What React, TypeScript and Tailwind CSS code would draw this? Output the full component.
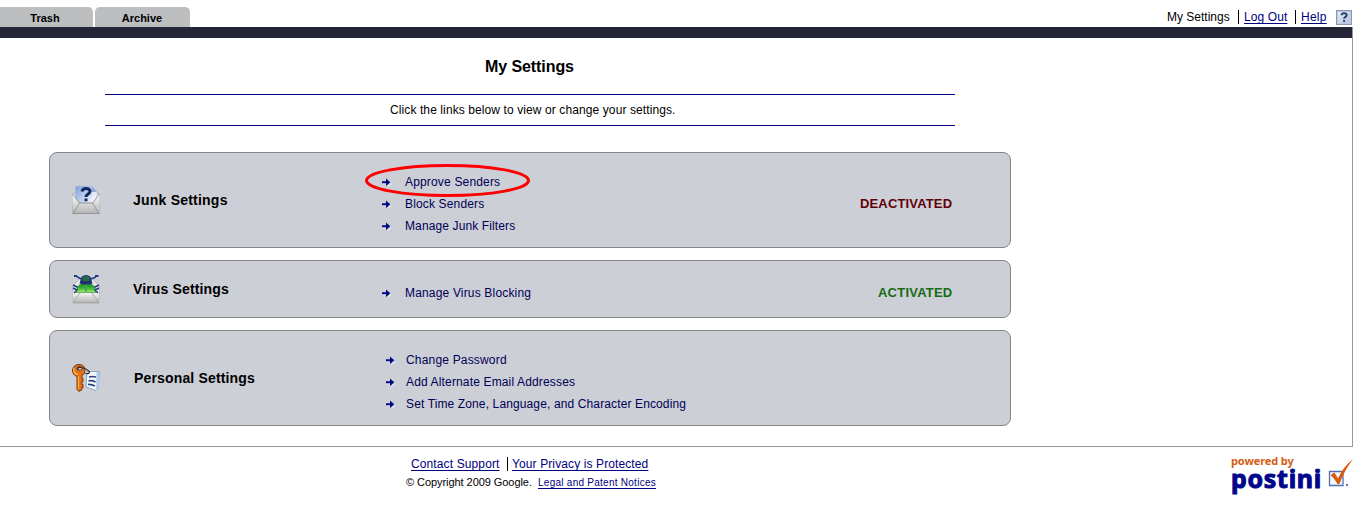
import type { ReactNode } from 'react';

function Arrow() {
  return (
    <svg width="9" height="9" viewBox="0 0 9 9" className="shrink-0">
      <path d="M1 5.7h4.2M6 8.5L9 5.6" stroke="#f4f5f8" strokeWidth="1" fill="none" />
      <path d="M0 3.3h4V0.5L8.3 4.2 4 8V5.2H0z" fill="#000a85" />
    </svg>
  );
}

function JunkIcon() {
  return (
    <svg width="30" height="30" viewBox="0 0 30 30">
      <defs>
        <linearGradient id="junkPaper" x1="0" x2="1" y1="0" y2="0.6">
          <stop offset="0" stopColor="#7f9fda" />
          <stop offset="1" stopColor="#f2f6fd" />
        </linearGradient>
        <linearGradient id="envelope" x1="0" x2="0" y1="0" y2="1">
          <stop offset="0" stopColor="#ffffff" />
          <stop offset="1" stopColor="#b4b4b4" />
        </linearGradient>
      </defs>
      <path d="M1.500 9L5 7h20l3.500 2v19.500h-27z" fill="#dcdde0" stroke="#a3a4a6" strokeWidth="0.8" />
      <path d="M1.500 9l7 9h13l7-9v19.500h-27z" fill="url(#envelope)" />
      <path d="M4.500 2.500q0-1.500 2-1.500h14l5.500 5v7l-4.500 5h-13l-4-5z" fill="url(#junkPaper)" stroke="#a6b7dc" strokeWidth="0.5" />
      <path d="M20.500 1v6H26z" fill="#8ca5d8" />
      <path d="M11 6.500q.5-3 4-3 4 0 4 3c0 2.500-4 2.700-4 5.500M15 13.500v2.800" fill="none" stroke="#132864" strokeWidth="3" />
      <path d="M1.500 9l7 9h13l7-9M8.500 18l-6 10M21.500 18l6 10M1.500 28.500h27" fill="none" stroke="#929292" strokeWidth="0.9" />
    </svg>
  );
}

function VirusIcon() {
  return (
    <svg width="30" height="30" viewBox="0 0 30 30">
      <defs>
        <linearGradient id="virusEnvelope" x1="0" x2="0" y1="0" y2="1">
          <stop offset="0" stopColor="#ffffff" />
          <stop offset="1" stopColor="#b0b0b0" />
        </linearGradient>
        <linearGradient id="shell" x1="0" x2="0" y1="0" y2="1">
          <stop offset="0" stopColor="#157a25" />
          <stop offset="0.55" stopColor="#35b52f" />
          <stop offset="1" stopColor="#a8f06c" />
        </linearGradient>
      </defs>
      <path d="M2 12l8-9h10l8 9v17H2z" fill="#e6e7e9" stroke="#aaaaaa" strokeWidth="0.7" />
      <path d="M10 5L5 2M20 5l5-2M8 14l-6-3M22 14l6-3" stroke="#203c86" strokeWidth="1.500" fill="none" />
      <path d="M3 2h3M24 2h3.500" stroke="#203c86" strokeWidth="2.200" />
      <path d="M2 17.500h26v11.500H2z" fill="url(#virusEnvelope)" />
      <path d="M5 18.500q1-9 9.500-10v10zM25 18.500q-1-9-9.500-10v10z" fill="url(#shell)" stroke="#267d36" strokeWidth="0.6" />
      <path d="M8.500 9.500l2-6.500q4.500-4 9 0l2 6.500q-6 2-13 0z" fill="#202f70" />
      <path d="M11.500 3.500q3.500-3 7 0V7h-7z" fill="#246c45" />
      <path d="M9 19l-6.500 9M21 19l6.500 9M2 28.700h26" fill="none" stroke="#a5a5a5" strokeWidth="0.9" />
      <path d="M2 14l4 2-3 3M28 14l-4 2 3 3" fill="none" stroke="#263e83" strokeWidth="1.500" />
    </svg>
  );
}

function KeyIcon() {
  return (
    <svg width="30" height="30" viewBox="0 0 30 30">
      <path d="M16 8.500h12.500l-1.500 17-2 2L15 24z" fill="#f6faff" stroke="#7896bb" strokeWidth="0.8" />
      <path d="M25 27l2.500-2 1-16h-3z" fill="#b2cbed" />
      <path d="M18 14q4-1 7 0M17.500 18q3-1 7 1M17 21.500q3-.5 7 1.500" stroke="#29437f" strokeWidth="1.600" fill="none" />
      <path d="M8 1.500q6 0 6 6 0 3.500-3 5v3h1v3h-1v3h1v3h-1v2l-3 2-2-2V13.500Q1.500 12 1.500 7q1-5.500 6.500-5.500z" fill="#e0701a" stroke="#7c340a" strokeWidth="1" />
      <path d="M7.500 13v13" stroke="#ffb238" strokeWidth="1.200" />
      <path d="M3 5q-1 6 4 6.500" stroke="#ffb844" strokeWidth="1.300" fill="none" />
      <ellipse cx="8.500" cy="5.500" rx="2.500" ry="1.800" fill="#cdced3" stroke="#5c2a08" strokeWidth="0.8" />
      <path d="M7 7q-1-3 3-2.500 6 1 8.500 4.500 0 2-4 1.500" fill="none" stroke="#242b36" strokeWidth="1.200" />
    </svg>
  );
}

function HelpIcon() {
  return (
    <svg width="16" height="15" viewBox="0 0 16 15" className="mt-[3px] shrink-0">
      <defs>
        <linearGradient id="helpFace" x1="0" x2="1" y1="0" y2="1">
          <stop offset="0" stopColor="#f0f4fb" />
          <stop offset="1" stopColor="#a9bbdb" />
        </linearGradient>
      </defs>
      <rect x="0.500" y="0.500" width="15" height="14" fill="url(#helpFace)" stroke="#8d98ae" />
      <rect x="1.500" y="1.500" width="13" height="12" fill="none" stroke="#b9c7df" />
      <path d="M5.500 5.300q0-2 2.600-2t2.600 1.900c0 1.700-2.600 1.600-2.600 3.500M8.100 10v2" fill="none" stroke="#2b3f6b" strokeWidth="1.900" />
    </svg>
  );
}

function SettingRow({ children, className }: { children: ReactNode; className: string }) {
  return (
    <li className="flex h-[22px] items-center">
      <Arrow />
      <a href="#" className={className}>{children}</a>
    </li>
  );
}

const card = 'flex w-[962px] rounded-[8px] border border-[#858588] bg-[#cdcfd6]';

export default function App() {
  return (
    <div className="h-[512px] w-[1355px] overflow-hidden bg-white font-['Liberation_Sans',Arial,sans-serif] text-[12px] leading-[14px] whitespace-nowrap text-black">
      <header className="flex h-[27px] w-[1355px] items-end justify-between">
        <nav className="flex gap-[2px] text-[11px] font-bold">
          <a href="#" className="flex h-5 w-[93px] items-center justify-center rounded-tr-[5px] bg-[#bdbec0] pt-[2px] pr-[3px]">Trash</a>
          <a href="#" className="flex h-5 w-[95px] items-center justify-center rounded-t-[5px] bg-[#bdbec0] pt-[2px] pr-[1px]">Archive</a>
        </nav>
        <div className="flex h-[20px] w-[188px] items-start">
          <span className="w-[71px] pt-[3px]">My Settings</span>
          <span className="mt-[3px] h-[14px] w-[6px] border-l border-black" />
          <a href="#" className="w-[51px] pt-[3px] tracking-[0.1px] text-[#000080] underline underline-offset-2">Log Out</a>
          <span className="mt-[3px] h-[14px] w-[6px] border-l border-black" />
          <a href="#" className="w-[35px] pt-[3px] tracking-[0.25px] text-[#000080] underline underline-offset-2">Help</a>
          <HelpIcon />
        </div>
      </header>
      <div className="h-[11px] w-[1352px] bg-[#242637]" />
      <main className="-mt-[11px] flex h-[420px] w-[1353px] flex-col border-r border-b border-[#999999] pt-[11px]">
        <div className="ml-[105px] flex h-[56px] w-[850px] justify-center pt-[19px]">
          <h1 className="w-[90px] text-[16px] leading-[19px] font-bold tracking-[-0.08px]">My Settings</h1>
        </div>
        <div className="ml-[105px] flex h-[32px] w-[850px] justify-center border-y border-[#000080] pt-[8px]">
          <p className="w-[280px] tracking-[0.1px]">Click the links below to view or change your settings.</p>
        </div>
        <div className="mt-[26px] ml-[49px] flex flex-col gap-[12px]">
          <section className={`${card} h-[96px]`}>
            <div className="w-[83px] pt-[32px] pl-[21px]"><JunkIcon /></div>
            <h2 className="w-[249px] pt-[39px] text-[14px] leading-4 font-bold tracking-[0.22px]">Junk Settings</h2>
            <ul className="w-[478px] pt-[18px] text-[#000055]">
              <SettingRow className="ml-[14px] tracking-[0.17px]">Approve Senders</SettingRow>
              <SettingRow className="ml-[14px] tracking-[0.15px]">Block Senders</SettingRow>
              <SettingRow className="ml-[14px] tracking-[0.12px]">Manage Junk Filters</SettingRow>
            </ul>
            <strong className="pt-[43px] text-[13px] leading-4 tracking-[0.15px] text-[#620008]">DEACTIVATED</strong>
          </section>
          <section className={`${card} h-[58px]`}>
            <div className="w-[83px] pt-[13px] pl-[21px]"><VirusIcon /></div>
            <h2 className="w-[249px] pt-[20px] text-[14px] leading-4 font-bold tracking-[0.14px]">Virus Settings</h2>
            <ul className="w-[496px] pt-[21px] text-[#000055]">
              <SettingRow className="ml-[14px] tracking-[0.17px]">Manage Virus Blocking</SettingRow>
            </ul>
            <strong className="pt-[24px] text-[13px] leading-4 tracking-[0.22px] text-[#176b12]">ACTIVATED</strong>
          </section>
          <section className={`${card} h-[96px]`}>
            <div className="w-[84px] pt-[32px] pl-[21px]"><KeyIcon /></div>
            <h2 className="w-[252px] pt-[39px] text-[14px] leading-4 font-bold tracking-[0.16px]">Personal Settings</h2>
            <ul className="pt-[18px] text-[#000055]">
              <SettingRow className="ml-[11px] tracking-[0.18px]">Change Password</SettingRow>
              <SettingRow className="ml-[11px] tracking-[0.15px]">Add Alternate Email Addresses</SettingRow>
              <SettingRow className="ml-[11px] tracking-[0.125px]">Set Time Zone, Language, and Character Encoding</SettingRow>
            </ul>
          </section>
        </div>
      </main>
      <footer className="flex h-[65px]">
        <div className="ml-[406px] w-[825px] pt-[10px]">
          <div className="flex pl-[5px]">
            <a href="#" className="w-[96px] tracking-[0.12px] text-[#000080] underline underline-offset-2">Contact Support</a>
            <span className="h-[14px] w-[5px] border-l border-black" />
            <a href="#" className="tracking-[0.11px] text-[#000080] underline underline-offset-2">Your Privacy is Protected</a>
          </div>
          <div className="mt-[4px] flex text-[11px] leading-[15px]">
            <span className="w-[132px] tracking-[-0.06px]">© Copyright 2009 Google.</span>
            <a href="#" className="text-[10px] tracking-[0.26px] text-[#000080] underline underline-offset-2">Legal and Patent Notices</a>
          </div>
        </div>
        <div className="flex w-[123px] items-start font-['Noto_Sans','Open_Sans',sans-serif] font-bold">
          <div className="w-[97px] pt-[7px]">
            <div className="h-[14px] text-[11px] leading-[14px] tracking-[-0.1px] text-[#d75c13]">powered by</div>
            <div className="text-[25px] leading-[20px] tracking-[0.7px] text-[#00068b] [-webkit-text-stroke:1px_#00068b]">postini</div>
          </div>
          <svg width="26" height="34" viewBox="0 0 26 34" className="mt-[10px]">
            <path d="M1.500 14.500h13.500v14H1.500z" fill="#f4f8ff" stroke="#526eb0" strokeWidth="1.300" />
            <path d="M2.500 18l4-2.500 3.500 6Q15 10 25 2 16 14 11.500 27h-2Q7 22 2.500 18z" fill="#d85b10" />
            <circle cx="19" cy="28" r="1.200" fill="#6978b9" />
          </svg>
        </div>
      </footer>
      <svg width="168" height="36" viewBox="0 0 168 36" className="pointer-events-none absolute top-[163px] left-[363px]">
        <ellipse cx="84.500" cy="17.500" rx="81" ry="15" fill="none" stroke="#ff0000" strokeWidth="3" />
      </svg>
    </div>
  );
}
